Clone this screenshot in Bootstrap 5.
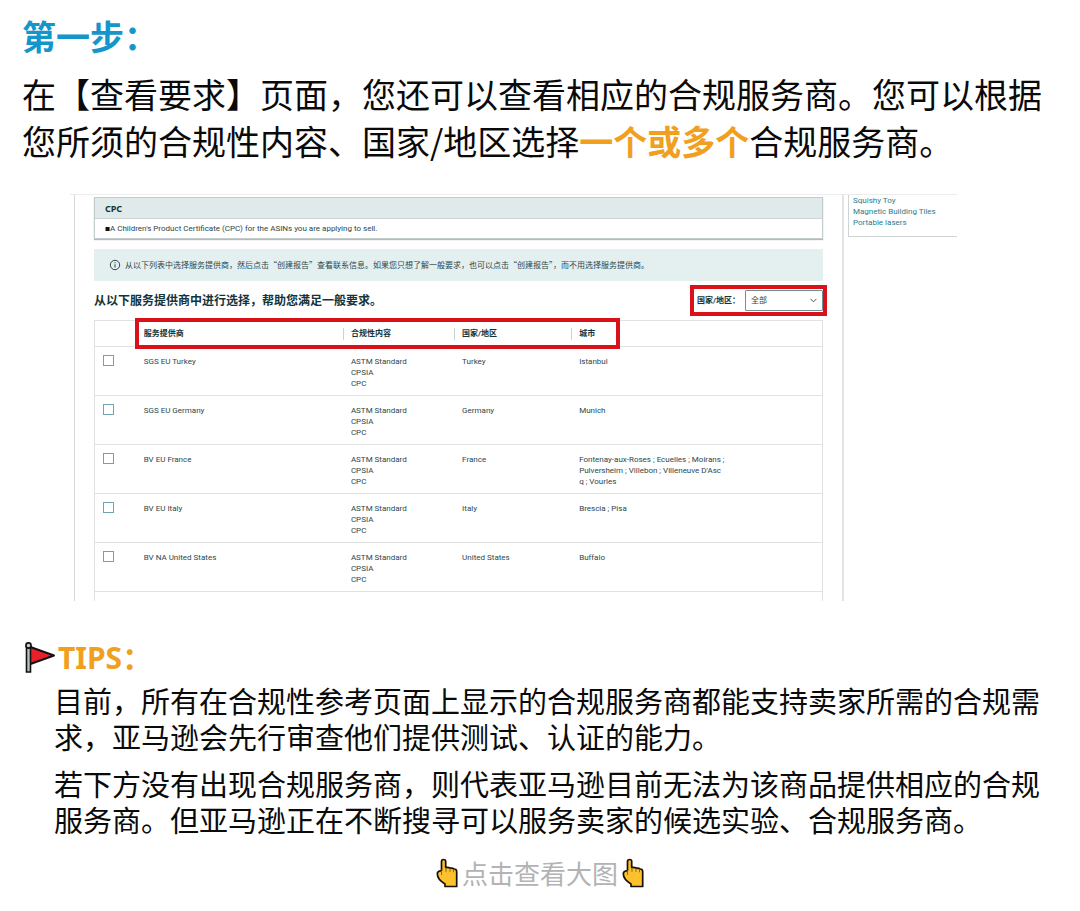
<!DOCTYPE html>
<html lang="zh-CN">
<head>
<meta charset="utf-8">
<meta name="viewport" content="width=device-width, initial-scale=1">
<title>第一步：选择合规服务商</title>
<link href="https://cdn.jsdelivr.net/npm/bootstrap@5.3.0/dist/css/bootstrap.min.css" rel="stylesheet">
<style>
  :root { --ink: #2b474c; --line: #dfe3e4; --red: #d9121a; --orange: #f0a01e; }
  body { font-family: "Noto Sans CJK SC", sans-serif; color: #0a0a0a; background: #fff; }
  .guide { padding: 12px 22px 17px; }
  .step-title { font-size: 34px; line-height: 47px; font-weight: 700; color: #1496cb; margin-bottom: 11px; }
  .intro { font-size: 34px; line-height: 47px; margin-bottom: 30px; }
  .intro strong, .tips-title { color: var(--orange); font-weight: 700; }

  .shot { margin: 0 101px 39px 48px; border-top: 1px solid #ececec; font-family: Roboto, "Noto Sans CJK SC", sans-serif; font-size: 8px; line-height: 11px; color: var(--ink); }
  .panel { margin-left: 4px; padding: 2px 19px 0; border-left: 1px solid #d5d9d9; border-right: 2px solid #e2e4e4; }
  .side { width: 113px; padding-left: 4px; }
  .side-box { border-left: 1px solid #cfd4d4; border-bottom: 1px solid #cfd4d4; padding: 0 0 8px 4px; }
  .side-box a { color: #2b7c8c; text-decoration: none; }

  .cert { border: 1px solid #c3cccc; box-shadow: 0 1px 1px #b5baba; margin-bottom: 10px; }
  .cert-head { background: #e0eaea; border-bottom: 1px solid #ccd5d5; padding: 5px 10px 4px; font-family: "Noto Sans", sans-serif; font-size: 9px; font-weight: 700; color: #14343a; }
  .cert-body { padding: 4px 10px; }
  .bullet { font-size: 5px; vertical-align: 1px; color: #111; }
  .notice { background: #e4f0f0; padding: 10px 15px; line-height: 12px; font-family: "Noto Sans CJK SC", sans-serif; margin-bottom: 4px; border-radius: 1px; }
  .pick-title { font-size: 12px; line-height: 16px; font-weight: 700; color: #14343a; }
  .region { border: 4px solid var(--red); padding: 1px 0 1px 3px; margin-right: -4px; }
  .region label { font-weight: 700; color: #14343a; width: 48px; }
  .region select { width: 78px; height: 21px; font-size: 8px; line-height: 11px; padding: 0 16px 0 5px; border: 1px solid #6f9299; border-radius: 1px; color: var(--ink); background-size: 7px 7px; background-position: right 5px center; }

  .providers { border: 1px solid var(--line); border-bottom: 0; margin-top: 4px; padding-bottom: 9px; }
  .providers table { width: 100%; table-layout: fixed; }
  .providers th { padding: 7px 8px 7px 0; line-height: 11px; font-weight: 700; color: #14343a; }
  .providers td { padding: 9px 8px 6px 0; vertical-align: top; }
  .providers tr { border-bottom: 1px solid var(--line); }
  .providers th + th:not(:nth-child(2)) { background: linear-gradient(#ccd2d2, #ccd2d2) no-repeat 0 center / 1px 12px; }
  .providers th:nth-child(n+3), .providers td:nth-child(n+3) { padding-left: 8px; }
  .providers td:first-child { padding: 8px 0 0 8px; }
  .providers .form-check-input[type=checkbox] { width: 11px; height: 11px; margin: 0; border: 1px solid #6fa3ad; border-radius: 0; display: block; }
  .marker { left: 5.5%; width: 66.7%; top: -3px; height: 31px; border: 4px solid var(--red); pointer-events: none; }

  .tips-title { font-family: "Noto Sans", "Noto Sans CJK SC", sans-serif; font-size: 30px; line-height: 36px; margin-bottom: 6px; }
  .tips-text { font-size: 29px; line-height: 36px; padding-left: 32px; }
  .tips-text p { margin-bottom: 11px; }
  .more { font-size: 26px; line-height: 36px; color: #b3b3b3; margin-top: 18px; }
</style>
</head>
<body>
<main class="guide">
  <h1 class="step-title">第一步：</h1>
  <p class="intro">在【查看要求】页面，您还可以查看相应的合规服务商。您可以根据您所须的合规性内容、国家/地区选择<strong>一个或多个</strong>合规服务商。</p>

  <section class="shot d-flex align-items-stretch">
    <div class="panel flex-grow-1">
      <div class="cert">
        <div class="cert-head">CPC</div>
        <div class="cert-body"><span class="bullet">■</span>A Children's Product Certificate (CPC) for the ASINs you are applying to sell.</div>
      </div>
      <div class="notice d-flex align-items-center">
        <svg class="flex-shrink-0 me-1" width="12" height="12" viewBox="0 0 12 12" fill="none" stroke="#2b474c" aria-hidden="true"><circle cx="6" cy="6" r="4.7"/><path d="M6 5.3v3.2M6 3.2v1.1"/></svg>
        <span>从以下列表中选择服务提供商，然后点击“创建报告”查看联系信息。如果您只想了解一般要求，也可以点击“创建报告”，而不用选择服务提供商。</span>
      </div>
      <div class="d-flex justify-content-between align-items-center">
        <h2 class="pick-title mb-0">从以下服务提供商中进行选择，帮助您满足一般要求。</h2>
        <div class="region d-flex align-items-center">
          <label for="region">国家/地区：</label>
          <select id="region" class="form-select"><option>全部</option></select>
        </div>
      </div>
      <div class="providers position-relative">
        <table>
          <colgroup><col style="width:6.7%"><col style="width:27.4%"><col style="width:15.3%"><col style="width:16.1%"><col></colgroup>
          <thead>
            <tr><th></th><th>服务提供商</th><th>合规性内容</th><th>国家/地区</th><th>城市</th></tr>
          </thead>
          <tbody>
            <tr><td><input class="form-check-input" type="checkbox" aria-label="SGS EU Turkey"></td><td>SGS EU Turkey</td><td>ASTM Standard<br>CPSIA<br>CPC</td><td>Turkey</td><td>Istanbul</td></tr>
            <tr><td><input class="form-check-input" type="checkbox" aria-label="SGS EU Germany"></td><td>SGS EU Germany</td><td>ASTM Standard<br>CPSIA<br>CPC</td><td>Germany</td><td>Munich</td></tr>
            <tr><td><input class="form-check-input" type="checkbox" aria-label="BV EU France"></td><td>BV EU France</td><td>ASTM Standard<br>CPSIA<br>CPC</td><td>France</td><td>Fontenay-aux-Roses ; Ecuelles ; Moirans ;<br>Pulversheim ; Villebon ; Villeneuve D'Asc<br>q ; Vourles</td></tr>
            <tr><td><input class="form-check-input" type="checkbox" aria-label="BV EU Italy"></td><td>BV EU Italy</td><td>ASTM Standard<br>CPSIA<br>CPC</td><td>Italy</td><td>Brescia ; Pisa</td></tr>
            <tr><td><input class="form-check-input" type="checkbox" aria-label="BV NA United States"></td><td>BV NA United States</td><td>ASTM Standard<br>CPSIA<br>CPC</td><td>United States</td><td>Buffalo</td></tr>
          </tbody>
        </table>
        <div class="marker position-absolute"></div>
      </div>
    </div>
    <aside class="side flex-shrink-0">
      <div class="side-box d-flex flex-column">
        <a href="#">Squishy Toy</a>
        <a href="#">Magnetic Building Tiles</a>
        <a href="#">Portable lasers</a>
      </div>
    </aside>
  </section>

  <h2 class="tips-title d-flex align-items-center">
    <svg width="36" height="34" viewBox="0 0 36 34" aria-hidden="true">
      <path d="M7 5.500 32 14.500 7 23.500z" fill="#e8202c" stroke="#111" stroke-width="2" stroke-linejoin="round"/>
      <path d="M4.500 5h4v26h-4z" fill="#b9c0c2" stroke="#111" stroke-width="1.600"/>
      <circle cx="6.500" cy="4.500" r="2.600" fill="#c9ced0" stroke="#111" stroke-width="1.600"/>
    </svg>
    <span>TIPS：</span>
  </h2>
  <div class="tips-text">
    <p>目前，所有在合规性参考页面上显示的合规服务商都能支持卖家所需的合规需求，亚马逊会先行审查他们提供测试、认证的能力。</p>
    <p class="mb-0">若下方没有出现合规服务商，则代表亚马逊目前无法为该商品提供相应的合规服务商。但亚马逊正在不断搜寻可以服务卖家的候选实验、合规服务商。</p>
  </div>

  <svg width="0" height="0" class="position-absolute" aria-hidden="true">
    <symbol id="hand" viewBox="0 0 22 30">
      <path d="M5.500 3.500C5.500 .8 9.700.8 9.700 3.500V9.500C12 9.300 13.500 9.600 14.500 10.200 16 10 17.200 10.300 18 11 19.800 10.900 20.700 12 20.700 13.800V28.500H9V26C6.500 24.500 1.300 20.500 1.300 15.800 1.300 13.800 2.500 12.800 5.500 12.600z" fill="#fcc12c" stroke="#15110a" stroke-width="1.700" stroke-linejoin="round"/>
      <path d="M5.500 12.600v4M10 10v3.400M14 10.500v3M17.500 11.300v2.600" fill="none" stroke="#8a5a10" stroke-width=".9" stroke-linecap="round"/>
    </symbol>
  </svg>
  <div class="more d-flex justify-content-center align-items-center">
    <svg width="22" height="30" aria-hidden="true"><use href="#hand"/></svg>
    <span class="px-1">点击查看大图</span>
    <svg width="22" height="30" aria-hidden="true"><use href="#hand"/></svg>
  </div>
</main>
<script src="https://cdn.jsdelivr.net/npm/bootstrap@5.3.0/dist/js/bootstrap.bundle.min.js"></script>
</body>
</html>
